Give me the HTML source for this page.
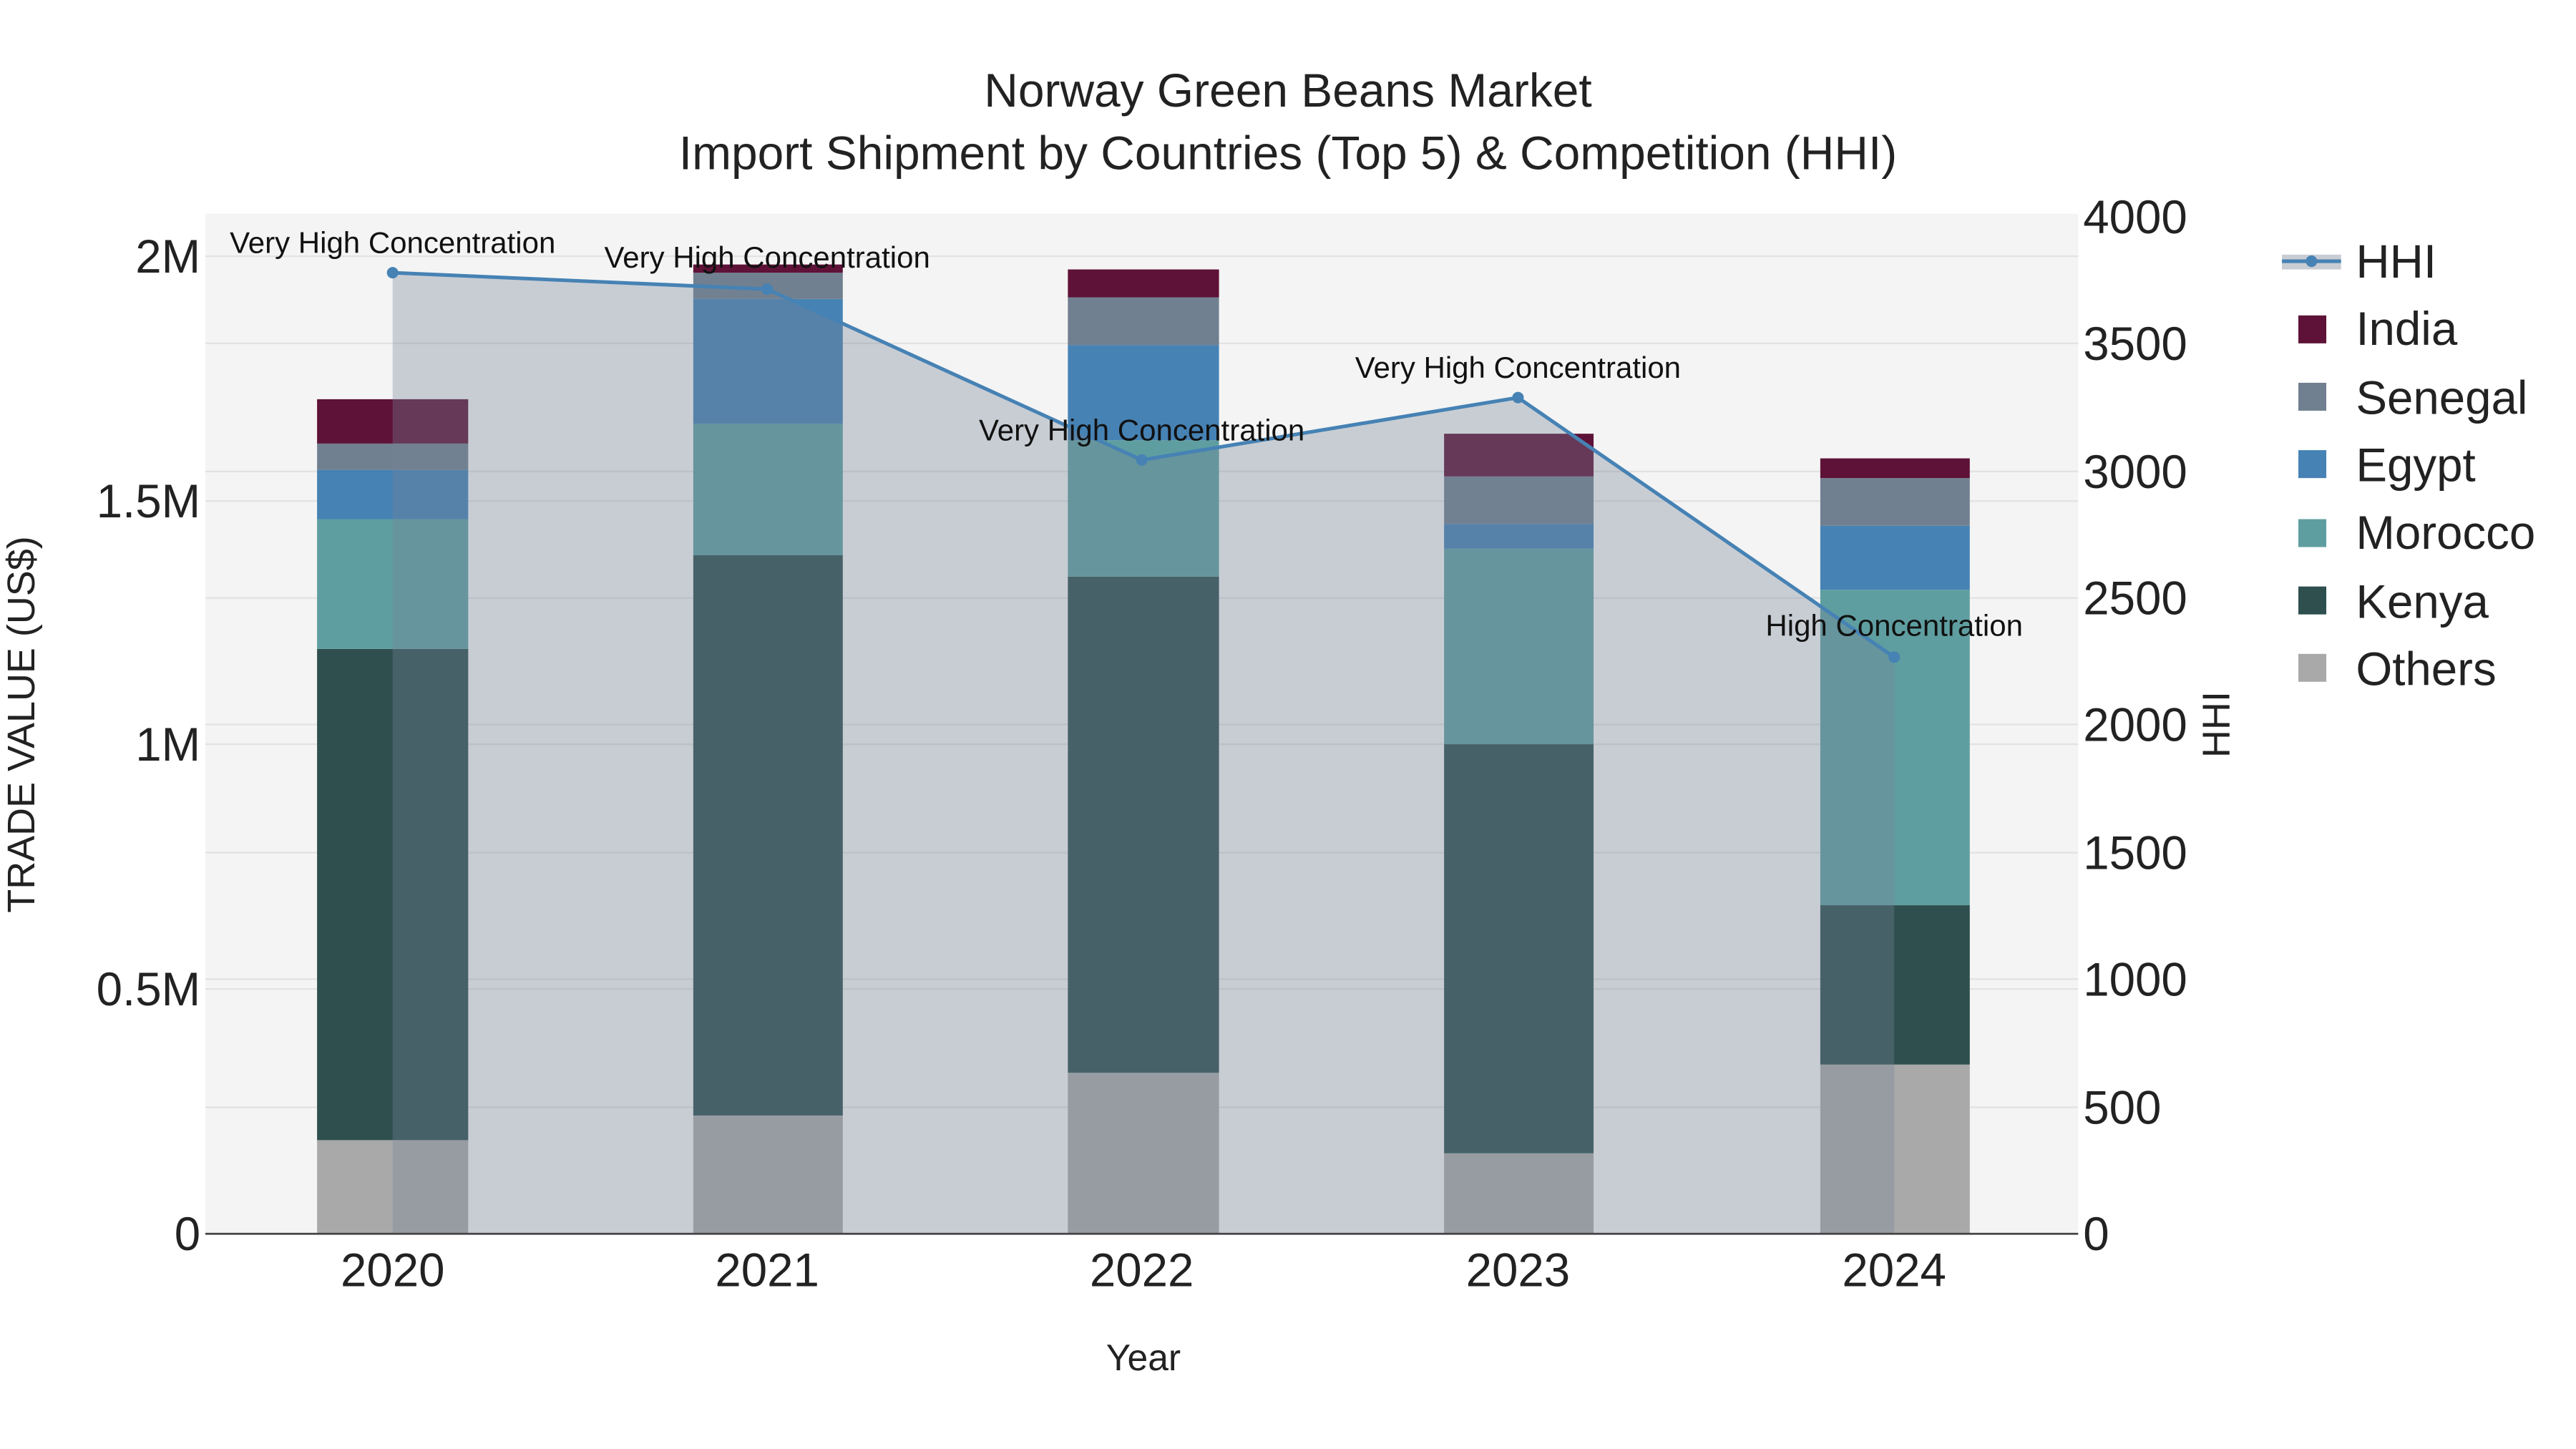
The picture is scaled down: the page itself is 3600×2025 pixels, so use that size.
<!DOCTYPE html>
<html><head><meta charset="utf-8"><style>html,body{margin:0;padding:0;background:#fff}svg{display:block}</style></head>
<body>
<svg width="3600" height="2025" viewBox="0 0 1568 882" xmlns="http://www.w3.org/2000/svg" font-family="Liberation Sans, Arial, sans-serif">
<rect width="1568" height="882" fill="#fff"/>
<rect x="125" y="130" width="1140" height="621" fill="#f4f4f4"/>
<g stroke="#e2e2e2" stroke-width="1">
<line x1="125" x2="1265" y1="602" y2="602"/><line x1="125" x2="1265" y1="453" y2="453"/><line x1="125" x2="1265" y1="305" y2="305"/><line x1="125" x2="1265" y1="156" y2="156"/>
<line x1="125" x2="1265" y1="674" y2="674"/><line x1="125" x2="1265" y1="596" y2="596"/><line x1="125" x2="1265" y1="519" y2="519"/><line x1="125" x2="1265" y1="441" y2="441"/><line x1="125" x2="1265" y1="364" y2="364"/><line x1="125" x2="1265" y1="287" y2="287"/><line x1="125" x2="1265" y1="209" y2="209"/>
</g>
<g>
<rect x="193" y="694" width="92" height="57" fill="#a9a9a9"/><rect x="193" y="395" width="92" height="299" fill="#2f4f4f"/><rect x="193" y="316" width="92" height="79" fill="#5f9ea0"/><rect x="193" y="286" width="92" height="30" fill="#4682b4"/><rect x="193" y="270" width="92" height="16" fill="#708090"/><rect x="193" y="243" width="92" height="27" fill="#5e1237"/>
<rect x="422" y="679" width="91" height="72" fill="#a9a9a9"/><rect x="422" y="338" width="91" height="341" fill="#2f4f4f"/><rect x="422" y="258" width="91" height="80" fill="#5f9ea0"/><rect x="422" y="182" width="91" height="76" fill="#4682b4"/><rect x="422" y="166" width="91" height="16" fill="#708090"/><rect x="422" y="161" width="91" height="5" fill="#5e1237"/>
<rect x="650" y="653" width="92" height="98" fill="#a9a9a9"/><rect x="650" y="351" width="92" height="302" fill="#2f4f4f"/><rect x="650" y="268" width="92" height="83" fill="#5f9ea0"/><rect x="650" y="210" width="92" height="58" fill="#4682b4"/><rect x="650" y="181" width="92" height="29" fill="#708090"/><rect x="650" y="164" width="92" height="17" fill="#5e1237"/>
<rect x="879" y="702" width="91" height="49" fill="#a9a9a9"/><rect x="879" y="453" width="91" height="249" fill="#2f4f4f"/><rect x="879" y="334" width="91" height="119" fill="#5f9ea0"/><rect x="879" y="319" width="91" height="15" fill="#4682b4"/><rect x="879" y="290" width="91" height="29" fill="#708090"/><rect x="879" y="264" width="91" height="26" fill="#5e1237"/>
<rect x="1108" y="648" width="91" height="103" fill="#a9a9a9"/><rect x="1108" y="551" width="91" height="97" fill="#2f4f4f"/><rect x="1108" y="359" width="91" height="192" fill="#5f9ea0"/><rect x="1108" y="320" width="91" height="39" fill="#4682b4"/><rect x="1108" y="291" width="91" height="29" fill="#708090"/><rect x="1108" y="279" width="91" height="12" fill="#5e1237"/>
</g>
<polygon points="239,166 467,176 695,280 924,242 1153,400 1153,751 239,751" fill="rgb(118,131,151)" fill-opacity="0.35"/>
<polyline points="239,166 467,176 695,280 924,242 1153,400" fill="none" stroke="#4682b4" stroke-width="2.2"/>
<g fill="#4682b4"><circle cx="239" cy="166" r="3.5"/><circle cx="467" cy="176" r="3.5"/><circle cx="695" cy="280" r="3.5"/><circle cx="924" cy="242" r="3.5"/><circle cx="1153" cy="400" r="3.5"/></g>
<line x1="125" x2="1265" y1="751" y2="751" stroke="#444" stroke-width="1.2"/>
<g font-size="18.3" text-anchor="middle" fill="#111">
<text x="239" y="154">Very High Concentration</text><text x="467" y="163">Very High Concentration</text><text x="695" y="268">Very High Concentration</text><text x="924" y="230">Very High Concentration</text><text x="1153" y="387">High Concentration</text>
</g>
<g font-size="28.7" text-anchor="middle" fill="#222">
<text x="784" y="65">Norway Green Beans Market</text>
<text x="784" y="103">Import Shipment by Countries (Top 5) &amp; Competition (HHI)</text>
</g>
<g font-size="28.5" text-anchor="end" fill="#222">
<text x="122" y="761">0</text><text x="122" y="612">0.5M</text><text x="122" y="463">1M</text><text x="122" y="315">1.5M</text><text x="122" y="166">2M</text>
</g>
<g font-size="28.5" fill="#222">
<text x="1268" y="761">0</text><text x="1268" y="684">500</text><text x="1268" y="606">1000</text><text x="1268" y="529">1500</text><text x="1268" y="451">2000</text><text x="1268" y="374">2500</text><text x="1268" y="297">3000</text><text x="1268" y="219">3500</text><text x="1268" y="142">4000</text>
</g>
<g font-size="28.5" text-anchor="middle" fill="#222">
<text x="239" y="783">2020</text><text x="467" y="783">2021</text><text x="695" y="783">2022</text><text x="924" y="783">2023</text><text x="1153" y="783">2024</text>
</g>
<text x="696" y="834" font-size="22.5" text-anchor="middle" fill="#222">Year</text>
<text transform="translate(21,441) rotate(-90)" font-size="23.5" text-anchor="middle" fill="#222">TRADE VALUE (US$)</text>
<text transform="translate(1357,441) rotate(-90)" font-size="23.5" text-anchor="middle" fill="#222">HHI</text>
<rect x="1389" y="155" width="36" height="9" fill="rgb(200,204,211)"/>
<line x1="1389" x2="1425" y1="159" y2="159" stroke="#4682b4" stroke-width="2.2"/><circle cx="1407" cy="159" r="3.5" fill="#4682b4"/>
<rect x="1399" y="192" width="17" height="17" fill="#5e1237"/>
<rect x="1399" y="233" width="17" height="17" fill="#708090"/>
<rect x="1399" y="274" width="17" height="17" fill="#4682b4"/>
<rect x="1399" y="316" width="17" height="17" fill="#5f9ea0"/>
<rect x="1399" y="357" width="17" height="17" fill="#2f4f4f"/>
<rect x="1399" y="398" width="17" height="17" fill="#a9a9a9"/>
<g font-size="28.5" fill="#222">
<text x="1434" y="169">HHI</text><text x="1434" y="210">India</text><text x="1434" y="252">Senegal</text><text x="1434" y="293">Egypt</text><text x="1434" y="334">Morocco</text><text x="1434" y="376">Kenya</text><text x="1434" y="417">Others</text>
</g>
</svg>
</body></html>
